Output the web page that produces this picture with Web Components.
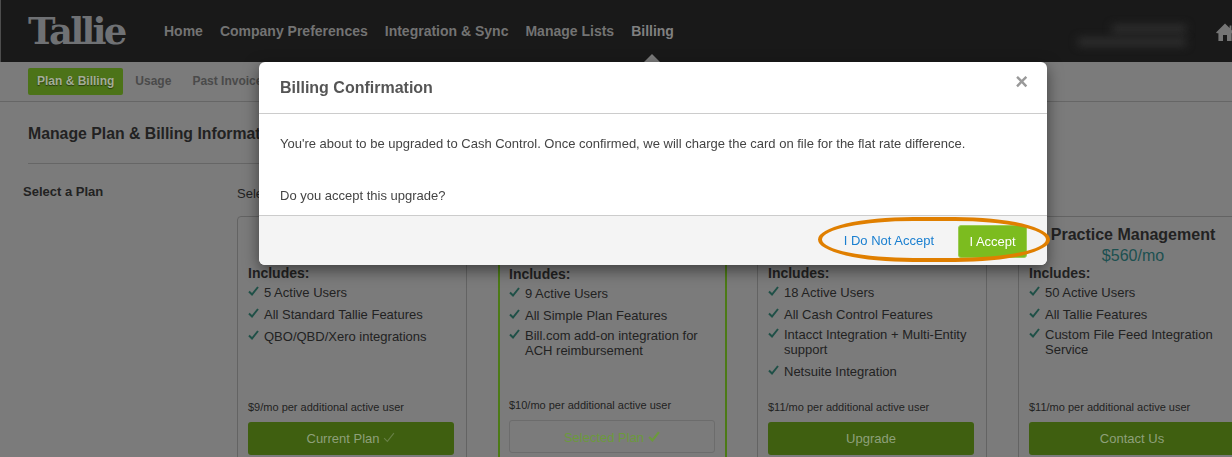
<!DOCTYPE html>
<html lang="en">
<head>
<meta charset="utf-8">
<title>Tallie - Billing</title>
<style>
    html, body { margin: 0; height: 457px; overflow: hidden; }
    body { font-family: "Liberation Sans", Arial, sans-serif; background: #7b7b7b; }
</style>
</head>
<body>
<tallie-header>
    <nav-link>Home</nav-link>
    <nav-link>Company Preferences</nav-link>
    <nav-link>Integration &amp; Sync</nav-link>
    <nav-link>Manage Lists</nav-link>
    <nav-link active>Billing</nav-link>
</tallie-header>
<sub-nav>
    <sub-tab active>Plan &amp; Billing</sub-tab>
    <sub-tab>Usage</sub-tab>
    <sub-tab>Past Invoices</sub-tab>
</sub-nav>
<billing-page>
    <plan-card note="$9/mo per additional active user" button="Current Plan" check="faint">
        <plan-feature>5 Active Users</plan-feature>
        <plan-feature>All Standard Tallie Features</plan-feature>
        <plan-feature>QBO/QBD/Xero integrations</plan-feature>
    </plan-card>
    <plan-card selected note="$10/mo per additional active user" button="Selected Plan" check="solid">
        <plan-feature>9 Active Users</plan-feature>
        <plan-feature>All Simple Plan Features</plan-feature>
        <plan-feature tight>Bill.com add-on integration for ACH reimbursement</plan-feature>
    </plan-card>
    <plan-card note="$11/mo per additional active user" button="Upgrade">
        <plan-feature>18 Active Users</plan-feature>
        <plan-feature>All Cash Control Features</plan-feature>
        <plan-feature tight>Intacct Integration + Multi-Entity support</plan-feature>
        <plan-feature>Netsuite Integration</plan-feature>
    </plan-card>
    <plan-card name="Practice Management" price="$560/mo" note="$11/mo per additional active user" button="Contact Us">
        <plan-feature>50 Active Users</plan-feature>
        <plan-feature>All Tallie Features</plan-feature>
        <plan-feature tight>Custom File Feed Integration Service</plan-feature>
    </plan-card>
</billing-page>
<confirm-dialog heading="Billing Confirmation">
    <p>You're about to be upgraded to Cash Control. Once confirmed, we will charge the card on file for the flat rate difference.</p>
    <p>Do you accept this upgrade?</p>
</confirm-dialog>

<script>
class TallieHeader extends HTMLElement {
    constructor() {
        super();
        this.attachShadow({ mode: 'open' });
        this.shadowRoot.innerHTML = `
            <style>
                :host {
                    display: flex;
                    align-items: flex-start;
                    height: 62px;
                    background: #191919;
                    border-left: 1px solid #4d4d4d;
                }
                .logo {
                    margin: 8px 0 0 27px;
                    width: 136px;
                    font: bold 37px/46px "DejaVu Serif", serif;
                    letter-spacing: -2.9px;
                    color: #6f7174;
                }
                nav { display: flex; gap: 17px; margin-top: 23px; }
                .user { position: relative; flex: 1; height: 62px; }
                .blur { position: absolute; background: #303030; filter: blur(4px); }
                .home { margin: 23px -2px 0 0; width: 18px; height: 18px; fill: #757575; }
            </style>
            <div class="logo">Tallie</div>
            <nav><slot></slot></nav>
            <div class="user">
                <div class="blur" style="left: 438px; top: 25px; width: 74px; height: 8px"></div>
                <div class="blur" style="left: 404px; top: 38px; width: 108px; height: 8px"></div>
            </div>
            <svg class="home" viewBox="0 0 18 18"><path d="M9 0.5 L13.6 5 V2.5 H15.4 V6.8 L18 9.4 L17 10.2 H15.6 V18 H11 V12 H7 V18 H2.4 V10.2 H1 L0 9.4 Z"/></svg>
        `;
    }
}

class NavLink extends HTMLElement {
    constructor() {
        super();
        this.attachShadow({ mode: 'open' });
        this.shadowRoot.innerHTML = `
            <style>
                :host {
                    display: block;
                    position: relative;
                    font: bold 14px/16px "Liberation Sans", Arial, sans-serif;
                    color: #737373;
                }
                :host([active]) { color: #808080; }
                :host([active])::after {
                    content: '';
                    position: absolute;
                    left: 13px;
                    top: 31px;
                    border: 8px solid transparent;
                    border-top: 0;
                    border-bottom-color: #7b7b7b;
                }
            </style>
            <slot></slot>
        `;
    }
}

class SubNav extends HTMLElement {
    constructor() {
        super();
        this.attachShadow({ mode: 'open' });
        this.shadowRoot.innerHTML = `
            <style>
                :host {
                    display: flex;
                    gap: 21px;
                    height: 39px;
                    padding-left: 28px;
                    align-items: center;
                    background: #7b7b7b;
                    border-bottom: 1px solid #666;
                }
            </style>
            <slot></slot>
        `;
    }
}

class SubTab extends HTMLElement {
    constructor() {
        super();
        this.attachShadow({ mode: 'open' });
        this.shadowRoot.innerHTML = `
            <style>
                :host {
                    display: block;
                    height: 27px;
                    font: bold 12px/27px "Liberation Sans", Arial, sans-serif;
                    color: #4a4a4a;
                    border-radius: 2px;
                }
                :host([active]) {
                    padding: 0 9px;
                    margin-right: -9px;
                    background: #4c7318;
                    color: #a4ac98;
                    text-shadow: 0 1px 1px rgba(0,0,0,.5);
                }
            </style>
            <slot></slot>
        `;
    }
}

class BillingPage extends HTMLElement {
    constructor() {
        super();
        this.attachShadow({ mode: 'open' });
        this.shadowRoot.innerHTML = `
            <style>
                :host { display: block; padding: 0 0 0 28px; color: #222; }
                h2 {
                    margin: 0;
                    height: 61px;
                    width: 800px;
                    font: bold 15.8px/63px "Liberation Sans", Arial, sans-serif;
                    border-bottom: 1px solid #666;
                    white-space: nowrap;
                }
                .cols { display: flex; margin-left: -5px; }
                .side {
                    flex: 0 0 214px;
                    padding-top: 20px;
                    font: bold 13px/15px "Liberation Sans", Arial, sans-serif;
                }
                .main { padding-top: 22px; }
                .lead { font: 13px/15px "Liberation Sans", Arial, sans-serif; height: 30px; }
                .cards { display: flex; gap: 30px; }
            </style>
            <h2>Manage Plan &amp; Billing Information</h2>
            <div class="cols">
                <div class="side">Select a Plan</div>
                <div class="main">
                    <div class="lead">Select</div>
                    <div class="cards"><slot></slot></div>
                </div>
            </div>
        `;
    }
}

class PlanCard extends HTMLElement {
    constructor() {
        super();
        this.attachShadow({ mode: 'open' });
        this.shadowRoot.innerHTML = `
            <style>
                :host {
                    display: block;
                    flex: 0 0 auto;
                    box-sizing: border-box;
                    width: 230px;
                    height: 260px;
                    padding: 0 10px;
                    border: 1px solid #636363;
                    border-radius: 4px 4px 0 0;
                }
                :host([selected]) {
                    width: 229px;
                    margin-left: 1px;
                    border: 2px solid #4c7a16;
                    padding: 0 9px;
                }
                :host(:last-child) { margin-left: 1px; }
                .top { height: 50px; text-align: center; }
                .name { font: bold 16px/18px "Liberation Sans", Arial, sans-serif; padding-top: 9px; white-space: nowrap; }
                .price { font: 16px/20px "Liberation Sans", Arial, sans-serif; color: #1c5050; margin-top: 2px; }
                .inc { font: bold 14px/16px "Liberation Sans", Arial, sans-serif; margin-top: -2px; }
                .list { height: 116px; padding-top: 4px; }
                :host([selected]) .list { height: 113px; }
                .note { font: 11px/13px "Liberation Sans", Arial, sans-serif; }
                button {
                    display: block;
                    box-sizing: border-box;
                    width: 206px;
                    height: 33px;
                    margin-top: 8px;
                    background: #3f5f10;
                    border: 0;
                    border-radius: 3px;
                    color: #8ea07a;
                    font: 13px/33px "Liberation Sans", Arial, sans-serif;
                    padding: 0;
                }
                :host([selected]) button {
                    background: transparent;
                    border: 1px solid #6c6c6c;
                    color: #6c9a3c;
                }
                svg { width: 12px; height: 11px; margin-left: 4px; fill: none; stroke: currentColor; stroke-width: 2; }
                .faint { stroke-width: 1; opacity: .5; }
            </style>
            <div class="top"><div class="name"></div><div class="price"></div></div>
            <div class="inc">Includes:</div>
            <div class="list"><slot></slot></div>
            <div class="note"></div>
            <button></button>
        `;
    }

    connectedCallback() {
        const s = this.shadowRoot;
        s.querySelector('.name').textContent = this.getAttribute('name') || '';
        s.querySelector('.price').textContent = this.getAttribute('price') || '';
        s.querySelector('.note').textContent = this.getAttribute('note') || '';
        const btn = s.querySelector('button');
        btn.textContent = this.getAttribute('button') || '';
        const check = this.getAttribute('check');
        if (check) {
            btn.insertAdjacentHTML('beforeend',
                `<svg class="${check}" viewBox="0 0 11 10"><path d="M1 5.5 L4 8.5 L10 1"/></svg>`);
        }
    }
}

class PlanFeature extends HTMLElement {
    constructor() {
        super();
        this.attachShadow({ mode: 'open' });
        this.shadowRoot.innerHTML = `
            <style>
                :host {
                    display: flex;
                    gap: 5px;
                    margin-bottom: 7px;
                    font: 13px/15px "Liberation Sans", Arial, sans-serif;
                }
                :host([tight]) { margin-top: -2px; margin-bottom: 7px; }
                svg { flex: 0 0 11px; width: 11px; height: 10px; margin-top: 1px; fill: none; stroke: #1f5047; stroke-width: 2; }
            </style>
            <svg viewBox="0 0 11 10"><path d="M1 5.5 L4 8.5 L10 1"/></svg>
            <div><slot></slot></div>
        `;
    }
}

class ConfirmDialog extends HTMLElement {
    constructor() {
        super();
        this.attachShadow({ mode: 'open' });
        this.shadowRoot.innerHTML = `
            <style>
                :host {
                    position: fixed;
                    left: 259px;
                    top: 62px;
                    width: 788px;
                    height: 203px;
                    display: flex;
                    flex-direction: column;
                    background: #fff;
                    border-radius: 6px;
                    box-shadow: 0 5px 15px rgba(0,0,0,.5);
                    color: #444;
                }
                header {
                    flex: none;
                    display: flex;
                    justify-content: space-between;
                    height: 51px;
                    padding: 0 19px 0 21px;
                    border-bottom: 1px solid #ccc;
                    font: bold 16px/51px "Liberation Sans", Arial, sans-serif;
                    color: #555;
                }
                .close { font: bold 22px/40px "Liberation Sans", Arial, sans-serif; color: #999; }
                .body { flex: 1; min-height: 0; padding: 22px 21px 0; font: 13px/15px "Liberation Sans", Arial, sans-serif; }
                ::slotted(p) { margin: 0 0 37px; }
                ::slotted(p:last-child) { margin: 0; }
                footer {
                    flex: none;
                    position: relative;
                    display: flex;
                    justify-content: flex-end;
                    align-items: center;
                    gap: 24px;
                    height: 49px;
                    padding: 0 20px;
                    border-top: 1px solid #ccc;
                    background: #f4f4f4;
                    border-radius: 0 0 6px 6px;
                    font: 13px/15px "Liberation Sans", Arial, sans-serif;
                }
                .no { color: #1a7fd0; }
                .yes {
                    box-sizing: border-box;
                    width: 69px;
                    height: 33px;
                    margin-top: 1px;
                    background: #7cbc1f;
                    border: 1px solid #9ccb55;
                    border-radius: 3px;
                    color: #fff;
                    text-align: center;
                    line-height: 31px;
                }
                .ring {
                    position: absolute;
                    left: 559px;
                    top: 1px;
                    width: 232px;
                    height: 45px;
                    box-sizing: border-box;
                    border: 4px solid #e07f00;
                    border-radius: 95px / 22.5px;
                }
            </style>
            <header><span id="title"></span><span class="close">&times;</span></header>
            <div class="body"><slot></slot></div>
            <footer>
                <span class="no">I Do Not Accept</span>
                <span class="yes">I Accept</span>
                <div class="ring"></div>
            </footer>
        `;
    }

    connectedCallback() {
        this.shadowRoot.getElementById('title').textContent = this.getAttribute('heading');
    }
}

customElements.define('tallie-header', TallieHeader);
customElements.define('nav-link', NavLink);
customElements.define('sub-nav', SubNav);
customElements.define('sub-tab', SubTab);
customElements.define('billing-page', BillingPage);
customElements.define('plan-card', PlanCard);
customElements.define('plan-feature', PlanFeature);
customElements.define('confirm-dialog', ConfirmDialog);
</script>
</body>
</html>
